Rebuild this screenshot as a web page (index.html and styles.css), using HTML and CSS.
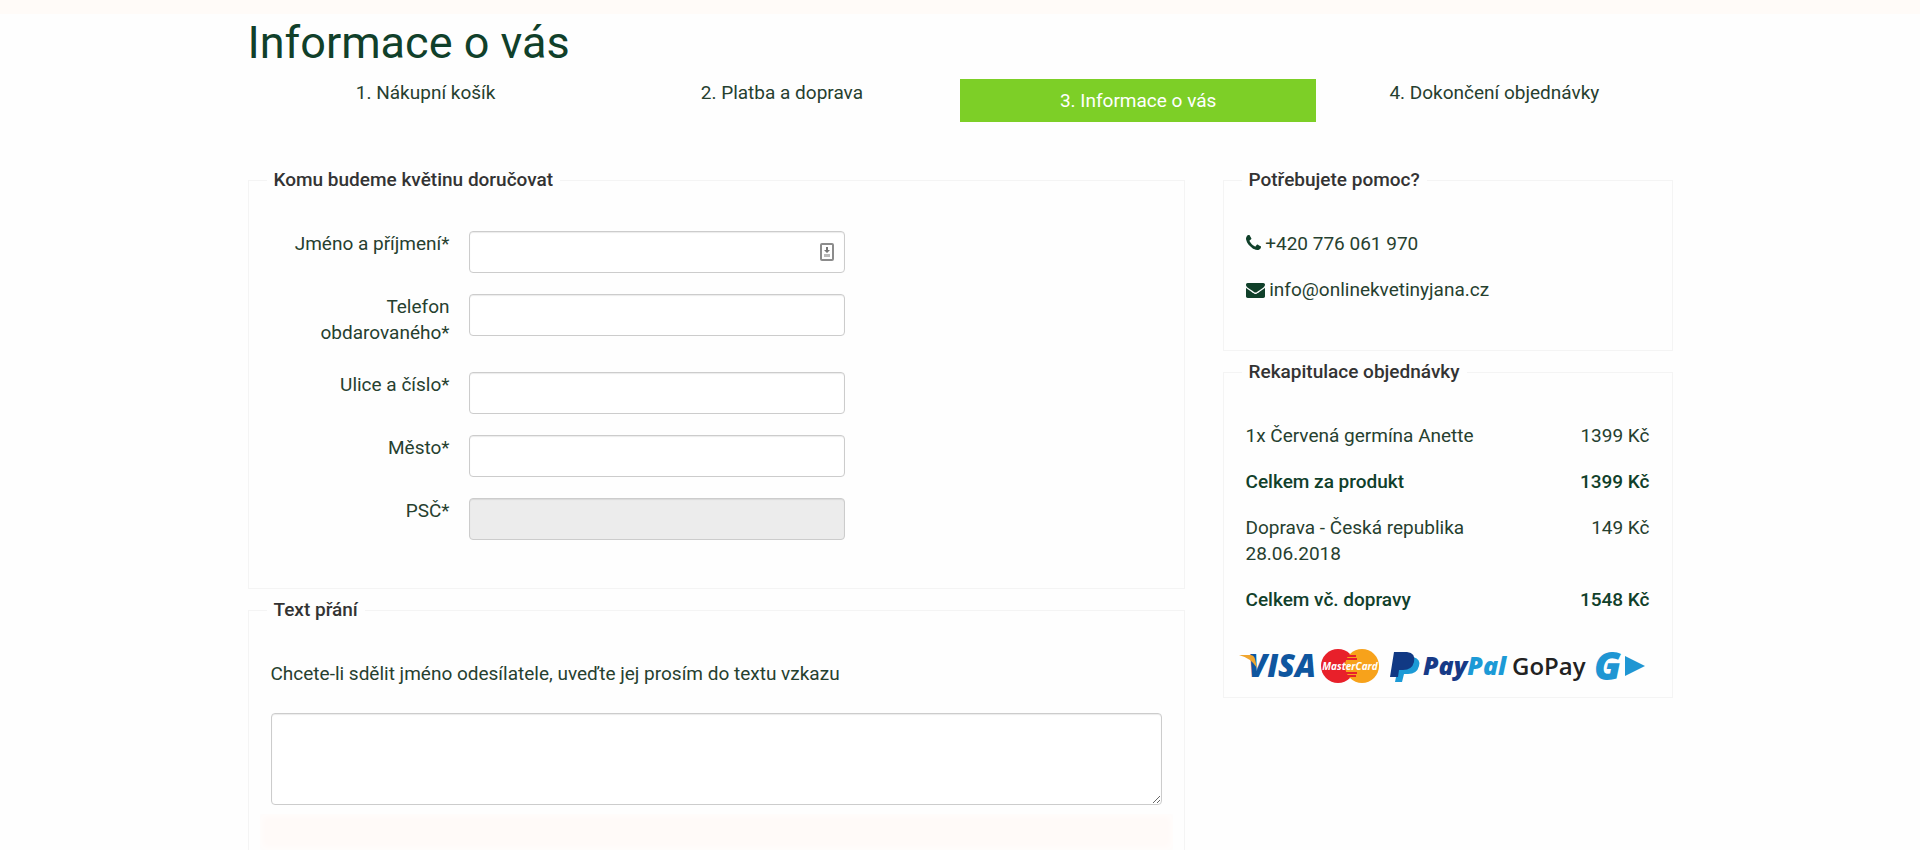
FILE: index.html
```html
<!DOCTYPE html>
<html lang="cs">
<head>
<meta charset="utf-8">
<title>Informace o vás</title>
<link rel="stylesheet" href="styles.css">
</head>
<body>
<div class="topband"></div>
<main class="container">
  <h1 class="title">Informace o vás</h1>
  <ol class="steps">
    <li class="step">1. Nákupní košík</li>
    <li class="step">2. Platba a doprava</li>
    <li class="step step-active" aria-current="step">3. Informace o vás</li>
    <li class="step">4. Dokončení objednávky</li>
  </ol>
  <div class="columns">
    <form class="main-column">
      <fieldset class="box">
        <legend class="box-title">Komu budeme květinu doručovat</legend>
        <div class="row">
          <label class="label" for="name">Jméno a příjmení*</label>
          <div class="field">
            <input class="input" id="name" type="text">
            <svg class="autofill" viewBox="0 0 16 20" aria-hidden="true">
              <rect x="2" y="2" width="12" height="16" rx="1" fill="#fff" stroke="#8c8c8c" stroke-width="2"/>
              <path d="M7 5h2v3h2l-3 3-3-3h2z" fill="#777"/>
              <path d="M5 12h6v3H5z" fill="#bbb"/>
            </svg>
          </div>
        </div>
        <div class="row">
          <label class="label" for="phone">Telefon obdarovaného*</label>
          <div class="field"><input class="input" id="phone" type="tel"></div>
        </div>
        <div class="row">
          <label class="label" for="street">Ulice a číslo*</label>
          <div class="field"><input class="input" id="street" type="text"></div>
        </div>
        <div class="row">
          <label class="label" for="city">Město*</label>
          <div class="field"><input class="input" id="city" type="text"></div>
        </div>
        <div class="row">
          <label class="label" for="zip">PSČ*</label>
          <div class="field"><input class="input" id="zip" type="text" disabled></div>
        </div>
      </fieldset>
      <fieldset class="box box-message">
        <legend class="box-title">Text přání</legend>
        <label class="hint" for="message">Chcete-li sdělit jméno odesílatele, uveďte jej prosím do textu vzkazu</label>
        <textarea class="input message" id="message"></textarea>
        <div class="notice"></div>
      </fieldset>
    </form>
    <aside class="side-column">
      <fieldset class="box">
        <legend class="box-title">Potřebujete pomoc?</legend>
        <p class="contact">
          <svg class="icon-phone" viewBox="0 0 1408 1408" aria-hidden="true"><path d="M1408 1112q0 27-10 70.500t-21 68.500q-21 50-122 106-94 51-186 51-27 0-53-3.500t-57.500-12.500-47-14.500-55.500-20.500-49-18q-98-35-175-83-127-79-264-216t-216-264q-48-77-83-175-3-9-18-49t-20.500-55.500-14.500-47-12.500-57.500-3.500-53q0-92 51-186 56-101 106-122 25-11 68.500-21t70.500-10q14 0 21 3 18 6 53 76 11 19 30 54t35 63.500 31 53.500q3 4 17.500 25t21.500 35.500 7 28.500q0 20-28.500 50t-62 55-62 53-28.500 46q0 9 5 22.500t8.500 20.500 14 24 11.500 19q76 137 174 235t235 174q2 1 19 11.500t24 14 20.500 8.500 22.500 5q18 0 46-28.500t53-62 55-62 50-28.500q14 0 28.500 7t35.500 21.500 25 17.500q25 15 53.500 31t63.500 35 54 30q70 35 76 53 3 7 3 21z" fill="currentColor"/></svg>
          +420 776 061 970</p>
        <p class="contact">
          <svg class="icon-mail" viewBox="0 0 1792 1408" aria-hidden="true"><path d="M1792 454v794q0 66-47 113t-113 47H160q-66 0-113-47T0 1248V454q44 49 101 87 362 246 497 345 57 42 92.500 65.500t94.500 48 110 24.500h2q51 0 110-24.500t94.500-48T1194 886q170-123 498-345 57-39 100-87zM1792 160q0 79-49 151t-122 123q-376 261-468 325-10 7-42.500 30.500t-54 38-52 32.500-57.500 27-50 9h-2q-23 0-50-9t-57.500-27-52-32.500-54-38T639 759q-91-64-262-182.500T172 434q-62-42-117-115.500T0 182q0-78 41.500-130T160 0h1472q65 0 112.500 47t47.500 113z" fill="currentColor"/></svg>
          info@onlinekvetinyjana.cz</p>
      </fieldset>
      <fieldset class="box box-summary">
        <legend class="box-title">Rekapitulace objednávky</legend>
        <table class="summary">
          <tr><td>1x Červená germína Anette</td><td class="price">1399 Kč</td></tr>
          <tr class="total"><td>Celkem za produkt</td><td class="price">1399 Kč</td></tr>
          <tr><td>Doprava - Česká republika 28.06.2018</td><td class="price">149 Kč</td></tr>
          <tr class="total"><td>Celkem vč. dopravy</td><td class="price">1548 Kč</td></tr>
        </table>
        <svg class="payments" viewBox="0 0 408 36" role="img" aria-label="Visa, MasterCard, PayPal, GoPay">
          <text class="visa" x="9" y="29">VISA</text>
          <path d="M0 7h11q4 0 5 4l2 9Q12 10 0 7z" fill="#f0a52e"/>
          <circle cx="99" cy="18" r="17" fill="#e8202a"/>
          <circle cx="123" cy="18" r="17" fill="#f7a21b"/>
          <path d="M108 8h9M107 11h11M107 25h11M108 28h9" stroke="#e8202a" stroke-width="2"/>
          <text class="mastercard" x="111" y="22" text-anchor="middle">MasterCard</text>
          <path d="M161 9h13q8 2 6 9-2 8-11 8h-4l-2 8h-7z" fill="#1c9ad6"/>
          <path d="M155 4h13q9 1 7 10-2 8-11 8h-4l-1 7h-8z" fill="#113984"/>
          <text class="paypal" x="184" y="27"><tspan fill="#173a87">Pay</tspan><tspan fill="#1c9ad6">Pal</tspan></text>
          <text class="gopay" x="273" y="27">GoPay</text>
          <text class="gmark" x="355" y="32">G</text>
          <path d="M386 8l20 10-20 10z" fill="#1f96d3"/>
        </svg>
      </fieldset>
    </aside>
  </div>
</main>
</body>
</html>
```

FILE: styles.css
```css
* { box-sizing: border-box; }
body {
  margin: 0;
  min-height: 100vh;
  display: flex;
  flex-direction: column;
  background: #fefefe;
  color: #26402f;
  font-family: Roboto, sans-serif;
  font-size: 19px;
  line-height: 26px;
}
.topband { height: 14px; background: #fffbf8; }
.container {
  width: 100%;
  max-width: 1425px;
  margin: 0 auto;
  flex: 1;
  display: flex;
  flex-direction: column;
}
.title {
  margin: 4px 0 11px;
  font-size: 45px;
  line-height: 50px;
  font-weight: 400;
  color: #10402a;
}
.steps {
  display: grid;
  grid-template-columns: repeat(4, 1fr);
  align-items: start;
  min-height: 88px;
  margin: 0;
  padding: 0;
  list-style: none;
  text-align: center;
}
.step { padding-top: 1px; }
.step-active { padding: 9px 0 8px; background: #7dcf27; color: #fff; }
.columns {
  flex: 1;
  display: grid;
  grid-template-columns: 937fr 450fr;
  column-gap: 38px;
}
.main-column { display: flex; flex-direction: column; }
.box {
  min-width: 0;
  margin: 0 0 8px;
  padding: 38px 22px 27px;
  border: 1px solid #f4f4f4;
}
.box-title {
  margin-left: -4px;
  padding: 0 7px;
  font-weight: 500;
  color: #333;
}
.row {
  display: grid;
  grid-template-columns: 179px minmax(0, 376px);
  column-gap: 19px;
  margin-bottom: 21px;
}
.label { margin-bottom: 5px; text-align: right; }
.field { position: relative; }
.input {
  display: block;
  width: 100%;
  height: 42px;
  padding: 6px 12px;
  border: 1px solid #ccc;
  border-radius: 4px;
  background: #fff;
  box-shadow: inset 0 1px 1px rgba(0, 0, 0, .08);
  color: #555;
  font: inherit;
}
.input:disabled { background: #ececec; }
.autofill { position: absolute; right: 10px; top: 11px; width: 16px; height: 20px; }
.box-message {
  flex: 1;
  margin-bottom: 0;
  padding-bottom: 0;
  border-bottom: 0;
}
.hint { display: block; margin-bottom: 26px; }
.message { height: 92px; resize: vertical; }
.notice {
  height: 36px;
  margin: 9px -11px 0;
  background: #fffaf8;
  box-shadow: inset 0 0 8px #fefefe;
}
.contact { margin: 0 0 20px; }
.icon-phone { width: 15px; height: 15px; color: #10402a; }
.icon-mail { width: 19px; height: 15px; vertical-align: -2px; color: #10402a; }
.box-summary { padding-bottom: 13px; }
.summary { width: 100%; border-collapse: collapse; }
.summary td { padding: 0 0 20px; vertical-align: top; }
.summary td:first-child { width: 60%; }
.summary .price { text-align: right; }
.total { font-weight: 500; color: #10402a; }
.payments { display: block; width: 408px; max-width: 105%; margin: 15px 0 0 -7px; overflow: visible; }
.visa { font: italic 800 31px "Open Sans", sans-serif; fill: #0f569f; }
.mastercard { font: italic 700 10px "Open Sans", sans-serif; fill: #fff; }
.paypal { font: italic 800 25px "Open Sans", sans-serif; }
.gopay { font: 600 24px "Open Sans", sans-serif; fill: #222; }
.gmark { font: italic 800 39px "Open Sans", sans-serif; fill: #1f96d3; }
```
